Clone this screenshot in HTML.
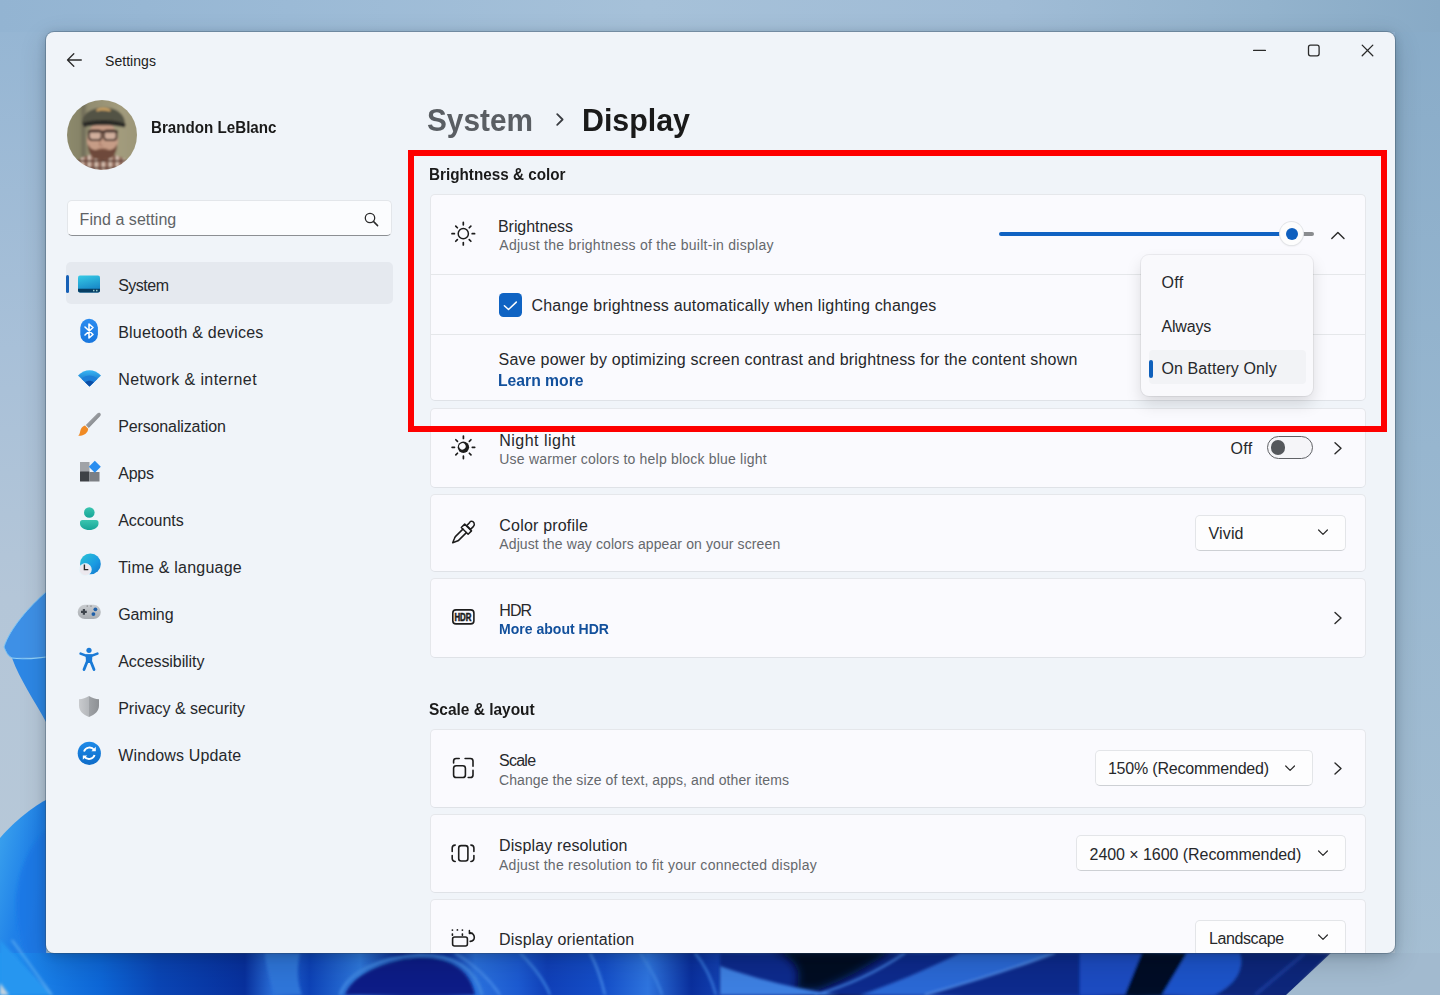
<!DOCTYPE html>
<html><head><meta charset="utf-8"><style>
html,body{margin:0;padding:0;width:1440px;height:995px;overflow:hidden}
body{position:relative;background:#8fb0cd;font-family:"Liberation Sans",sans-serif}
.a,.t{position:absolute}
.t{white-space:nowrap}
#win{position:absolute;left:46px;top:32px;width:1349px;height:921px;border-radius:8px;overflow:hidden;background:#f0f4f9;box-shadow:0 0 0 1px rgba(50,70,90,0.32),0 2px 10px rgba(20,40,60,0.22),0 8px 28px rgba(0,0,0,0.16)}
#inner{position:absolute;left:-46px;top:-32px;width:1440px;height:995px}
.card{position:absolute;left:430px;width:936px;background:#fafafe;border:1px solid #e5e7eb;border-bottom-color:#dfe2e7;border-radius:5px;box-sizing:border-box}
.dd{background:#fdfdfe;border:1px solid #e3e5e8;border-bottom-color:#cdd0d4;border-radius:5px;box-sizing:border-box}
</style></head><body>
<svg class="a" style="left:0;top:0" width="1440" height="995" viewBox="0 0 1440 995">
<defs>
<linearGradient id="bgtop" x1="0" y1="0" x2="1" y2="0"><stop offset="0" stop-color="#93b4d2"/><stop offset="0.2" stop-color="#9bbad6"/><stop offset="0.45" stop-color="#a6c1d9"/><stop offset="0.7" stop-color="#a0bcd6"/><stop offset="0.88" stop-color="#93b3cd"/><stop offset="1" stop-color="#88aac6"/></linearGradient>
<linearGradient id="bgl" x1="0" y1="0" x2="0" y2="1"><stop offset="0" stop-color="#94b5d3"/><stop offset="0.35" stop-color="#a8c0d8"/><stop offset="0.6" stop-color="#b4c6d8"/><stop offset="1" stop-color="#b8c9d8"/></linearGradient>
<linearGradient id="bgr" x1="0" y1="0" x2="0" y2="1"><stop offset="0" stop-color="#88abc8"/><stop offset="0.45" stop-color="#97b6cf"/><stop offset="1" stop-color="#a6bfd3"/></linearGradient>
<linearGradient id="pet1" x1="0" y1="0" x2="0" y2="1"><stop offset="0" stop-color="#3b8fe6"/><stop offset="1" stop-color="#2f87e4"/></linearGradient>
<linearGradient id="pet2" x1="0" y1="0" x2="1" y2="1"><stop offset="0" stop-color="#3ea6ee"/><stop offset="0.5" stop-color="#1f80e8"/><stop offset="1" stop-color="#2a78e0"/></linearGradient>
<linearGradient id="blm" x1="0" y1="0" x2="1" y2="0">
<stop offset="0" stop-color="#2196f0"/><stop offset="0.02" stop-color="#1c84ea"/><stop offset="0.07" stop-color="#0d66d6"/><stop offset="0.11" stop-color="#0a45b4"/><stop offset="0.17" stop-color="#08309c"/>
<stop offset="0.19" stop-color="#2a6fd8"/><stop offset="0.215" stop-color="#0d42b6"/><stop offset="0.25" stop-color="#2e78dc"/><stop offset="0.28" stop-color="#08238e"/><stop offset="0.31" stop-color="#0c33a4"/><stop offset="0.33" stop-color="#2a70dc"/>
<stop offset="0.36" stop-color="#1c5ad0"/><stop offset="0.38" stop-color="#1040b8"/><stop offset="0.42" stop-color="#154fc8"/><stop offset="0.45" stop-color="#2e74de"/><stop offset="0.48" stop-color="#0a2f9c"/><stop offset="0.52" stop-color="#1a50c4"/>
<stop offset="0.55" stop-color="#142e90"/><stop offset="0.58" stop-color="#040a2a"/><stop offset="0.61" stop-color="#183c9c"/><stop offset="0.64" stop-color="#2a66d4"/><stop offset="0.67" stop-color="#0c2c92"/><stop offset="0.72" stop-color="#0a35a6"/>
<stop offset="0.76" stop-color="#0a3ab0"/><stop offset="0.79" stop-color="#040e40"/><stop offset="0.83" stop-color="#1a48bc"/><stop offset="0.86" stop-color="#0a2a84"/><stop offset="0.9" stop-color="#0a2570"/><stop offset="0.92" stop-color="#7f98b4"/><stop offset="1" stop-color="#a9c0d3"/>
</linearGradient>
<filter id="blur2"><feGaussianBlur stdDeviation="1.5"/></filter><filter id="blur4" x="-20%" y="-50%" width="140%" height="200%"><feGaussianBlur stdDeviation="4"/></filter>
</defs>
<rect width="1440" height="995" fill="url(#bgl)"/>
<rect x="1395" y="0" width="45" height="995" fill="url(#bgr)"/>
<rect x="0" y="0" width="1440" height="32" fill="url(#bgtop)"/>
<path d="M46 592C30 606 10 628 4 647C6 652 8 656 12 658L46 657Z" fill="#3e90e6"/>
<path d="M12 658C20 680 34 700 46 722V657Z" fill="#2d87e5"/>
<path d="M12 658C24 660 36 658 46 657" stroke="#8fd0f8" stroke-width="1.2" fill="none"/>
<path d="M46 592C30 606 10 628 4 647C6 652 8 656 12 658" stroke="#7cc4f4" stroke-width="1" fill="none"/>
<path d="M46 800C30 808 10 826 0 838V995H46Z" fill="url(#pet2)"/>
<path d="M46 830C30 845 18 870 16 900C16 940 30 970 46 985Z" fill="#1a78e6" filter="url(#blur2)" opacity="0.8"/>
<path d="M0 983L10 995H0Z" fill="#c6d3de"/>
<rect x="0" y="953" width="1440" height="42" fill="url(#blm)"/>
<g filter="url(#blur2)">
<path d="M0 940L52 995H0Z" fill="#2596f0"/>
<path d="M12 940L52 995" stroke="#7cc6f6" stroke-width="1.2"/>
<path d="M345 995C352 975 380 962 420 958C450 958 470 970 475 995Z" fill="#0a1f86"/>
<path d="M340 995C348 972 378 958 420 955C455 955 475 968 482 995" stroke="#3f86e0" stroke-width="3" fill="none"/>
<path d="M265 953H300C296 970 298 985 302 995H275C270 980 266 965 265 953Z" fill="#2f74d8"/>
<path d="M455 953C475 965 490 980 500 995" stroke="#4a8eea" stroke-width="2" fill="none"/>
<path d="M520 953C535 968 545 982 550 995" stroke="#3f86e4" stroke-width="2" fill="none"/>
<path d="M590 953C598 968 602 982 605 995" stroke="#4a8eea" stroke-width="2" fill="none"/>
<path d="M640 953C650 968 658 982 662 995" stroke="#3f86e4" stroke-width="2" fill="none"/>
<path d="M695 953C705 965 712 980 716 995" stroke="#3a7ee0" stroke-width="2" fill="none"/>
<path d="M720 953H1080V995H720Z" fill="#0a2a8c"/>
</g><path d="M770 948H895C870 966 845 980 818 990H795C802 975 800 960 770 948Z" fill="#030a20" filter="url(#blur4)"/><g filter="url(#blur2)">

<path d="M720 966C760 980 800 990 840 995H720Z" fill="#3d7fe0"/>
<path d="M960 953H1055C1010 970 960 985 925 995H860C890 985 930 968 960 953Z" fill="#2c68d4"/>
<path d="M905 953C880 970 850 985 815 995" stroke="#4a8cec" stroke-width="2" fill="none"/>
<path d="M1055 953C1010 970 960 985 925 995" stroke="#5a9af0" stroke-width="1.5" fill="none"/>
<path d="M1080 953H1142L1125 995H1080Z" fill="#1a4cc0"/>
<path d="M1142 953H1187L1162 995H1125Z" fill="#030a28"/>
<path d="M1187 953H1240C1245 970 1235 985 1215 995H1162Z" fill="#1f52c8"/>
<path d="M1240 953H1332L1286 995H1215C1235 985 1245 970 1240 953Z" fill="#0a267a"/>
<path d="M1305 953L1255 995" stroke="#1a3a9a" stroke-width="3" fill="none"/>
<path d="M0 983L9 995H0Z" fill="#c6d3de"/>
</g>
<path d="M1331 953H1440V995H1286Z" fill="#a2bacf"/>
</svg>

<div id="win"><div id="inner">
<div class="t" style="left:105px;top:52px;font-size:14px;line-height:19px;font-weight:400;color:#202020;letter-spacing:0.052px;">Settings</div>
<div class="a" style="left:66.8px;top:100.2px;width:70px;height:70px;border-radius:50%;overflow:hidden">
<svg width="70" height="70" viewBox="0 0 70 70">
<defs>
<filter id="av" x="-10%" y="-10%" width="120%" height="120%"><feGaussianBlur stdDeviation="1.1"/></filter>
<linearGradient id="avbg" x1="0" y1="0" x2="1" y2="0"><stop offset="0" stop-color="#8e8b6e"/><stop offset="0.2" stop-color="#878468"/><stop offset="0.25" stop-color="#6f6c58"/><stop offset="0.31" stop-color="#918c70"/><stop offset="0.75" stop-color="#a29b7c"/><stop offset="1" stop-color="#9c9678"/></linearGradient>
<pattern id="plaid" width="7" height="7" patternUnits="userSpaceOnUse"><rect width="7" height="7" fill="#a07a6a"/><rect width="2.5" height="7" fill="#d9c3b4"/><rect y="4" width="7" height="2" fill="#5e4036"/><rect x="5" width="1.2" height="7" fill="#6e4c40"/></pattern>
</defs>
<g filter="url(#av)">
<rect x="-2" y="-2" width="74" height="74" fill="url(#avbg)"/>
<path d="M4 74C6 60 16 54 35 54C54 54 64 60 66 74Z" fill="url(#plaid)"/>
<ellipse cx="35.5" cy="40" rx="15.5" ry="18.5" fill="#c69c86"/>
<path d="M21 44C21 56 27 60 35.5 60C44 60 50 56 50 44C48 49 44 51 40 49.5C37 48 34 48 31 49.5C27 51 23 49 21 44Z" fill="#6e4a3a"/>
<path d="M30 49.5C33 48.5 38 48.5 41 49.5" stroke="#9a6e5a" stroke-width="1.2" fill="none"/>
<path d="M33.5 38L32.5 45L36 46" stroke="#a87a66" stroke-width="1.2" fill="none"/>
<path d="M15 24C14 3 58 1 58 24Z" fill="#535244"/>
<path d="M15 23C26 19 48 19 59 24L57.5 27.5C48 24.5 25 24.5 17 27Z" fill="#2b2a27"/>
<path d="M29 10C31 6.5 41 6.5 44 10L43 11.5C38 10 33 10 30 11.5Z" fill="#c9a062"/>
<rect x="22" y="30.5" width="12.5" height="9.5" rx="3" fill="#d0ae9c" stroke="#45302a" stroke-width="1.8"/>
<rect x="37" y="30.5" width="12.5" height="9.5" rx="3" fill="#d0ae9c" stroke="#45302a" stroke-width="1.8"/>
<path d="M21 31.5H51" stroke="#3e2c26" stroke-width="2"/>
</g>
</svg></div>
<div class="t" style="left:150.5px;top:116.5px;font-size:16px;line-height:22px;font-weight:700;color:#1a1a1a;transform:scaleX(0.9474);transform-origin:0 0;">Brandon LeBlanc</div>
<div class="a" style="left:66.8px;top:199.6px;width:325.4px;height:36.6px;background:#fbfcfe;border:1px solid #e3e6ea;border-bottom:1px solid #8c8f93;border-radius:5px;box-sizing:border-box"></div>
<div class="t" style="left:79.6px;top:209px;font-size:16px;line-height:22px;font-weight:400;color:#606366;letter-spacing:0.046px;">Find a setting</div>
<div class="a" style="left:65.7px;top:262.4px;width:327.4px;height:41.8px;background:#e5e9ef;border-radius:5px"></div>
<div class="a" style="left:65.8px;top:274.7px;width:3.7px;height:18.6px;background:#1660b6;border-radius:2px"></div>
<div class="t" style="left:118.2px;top:275px;font-size:16px;line-height:22px;font-weight:400;color:#26282b;letter-spacing:-0.507px;">System</div>
<div class="t" style="left:118.2px;top:322px;font-size:16px;line-height:22px;font-weight:400;color:#26282b;letter-spacing:0.204px;">Bluetooth &amp; devices</div>
<div class="t" style="left:118.2px;top:369px;font-size:16px;line-height:22px;font-weight:400;color:#26282b;letter-spacing:0.399px;">Network &amp; internet</div>
<div class="t" style="left:118.2px;top:416px;font-size:16px;line-height:22px;font-weight:400;color:#26282b;letter-spacing:-0.127px;">Personalization</div>
<div class="t" style="left:118.2px;top:463px;font-size:16px;line-height:22px;font-weight:400;color:#26282b;letter-spacing:-0.217px;">Apps</div>
<div class="t" style="left:118.2px;top:510px;font-size:16px;line-height:22px;font-weight:400;color:#26282b;letter-spacing:-0.052px;">Accounts</div>
<div class="t" style="left:118.2px;top:557px;font-size:16px;line-height:22px;font-weight:400;color:#26282b;letter-spacing:0.229px;">Time &amp; language</div>
<div class="t" style="left:118.2px;top:604px;font-size:16px;line-height:22px;font-weight:400;color:#26282b;letter-spacing:-0.137px;">Gaming</div>
<div class="t" style="left:118.2px;top:651px;font-size:16px;line-height:22px;font-weight:400;color:#26282b;letter-spacing:-0.072px;">Accessibility</div>
<div class="t" style="left:118.2px;top:698px;font-size:16px;line-height:22px;font-weight:400;color:#26282b;letter-spacing:-0.019px;">Privacy &amp; security</div>
<div class="t" style="left:118.2px;top:745px;font-size:16px;line-height:22px;font-weight:400;color:#26282b;letter-spacing:0.154px;">Windows Update</div>
<svg class="a" style="left:77px;top:274px" width="24" height="20" viewBox="0 0 24 20"><defs><linearGradient id="sys" x1="0" y1="0" x2="0.3" y2="1"><stop offset="0" stop-color="#36cbe6"/><stop offset="1" stop-color="#1684c6"/></linearGradient></defs><rect x="1" y="1.5" width="22" height="17" rx="2" fill="url(#sys)"/><path d="M1 14.8H23V16.5A2 2 0 0 1 21 18.5H3A2 2 0 0 1 1 16.5Z" fill="#073e63"/><rect x="16" y="15.8" width="1.5" height="1.5" fill="#9cc"/><rect x="19" y="15.8" width="1.5" height="1.5" fill="#9cc"/></svg>
<svg class="a" style="left:79px;top:318px" width="20" height="26" viewBox="0 0 20 26"><defs><linearGradient id="bt" x1="0" y1="0" x2="0" y2="1"><stop offset="0" stop-color="#2c8cf0"/><stop offset="1" stop-color="#1876de"/></linearGradient></defs><rect x="1.3" y="0.8" width="17.6" height="24.2" rx="8.8" fill="url(#bt)"/><path d="M6 9L14 16.5L10 20V6L14 9.5L6 17" stroke="#fff" stroke-width="1.6" fill="none" stroke-linejoin="round" stroke-linecap="round"/></svg>
<svg class="a" style="left:77px;top:368px" width="25" height="20" viewBox="0 0 25 20"><defs><linearGradient id="wf" x1="0" y1="0" x2="0" y2="1"><stop offset="0" stop-color="#38b6f4"/><stop offset="1" stop-color="#0c5bb8"/></linearGradient></defs><path d="M1 7.5C4.5 4 8.5 2.2 12.5 2.2C16.5 2.2 20.5 4 24 7.5L12.5 18.5Z" fill="url(#wf)"/><path d="M4.5 10.8C7 8.6 9.7 7.6 12.5 7.6C15.3 7.6 18 8.6 20.5 10.8L12.5 18.5Z" fill="#1d7fd8"/><path d="M8.2 14.3C9.5 13.3 11 12.8 12.5 12.8C14 12.8 15.5 13.3 16.8 14.3L12.5 18.5Z" fill="#0b4ea6"/></svg>
<svg class="a" style="left:77px;top:412px" width="25" height="25" viewBox="0 0 25 25"><defs><linearGradient id="pb" x1="0" y1="0" x2="1" y2="1"><stop offset="0" stop-color="#b9bcc0"/><stop offset="1" stop-color="#6d7075"/></linearGradient></defs><path d="M23.2 1.3C24.2 2.2 23.8 3.6 22.8 4.6L11.8 16L8.8 13L20 1.8C21 0.8 22.3 0.5 23.2 1.3Z" fill="url(#pb)"/><path d="M8 13.5L11.2 16.7C11 20.5 7.5 24 1.3 23.8C3.3 21.8 2.8 19.6 3.8 17.3C4.8 15 6.5 14 8 13.5Z" fill="#f08a24"/></svg>
<svg class="a" style="left:79px;top:460px" width="23" height="23" viewBox="0 0 23 23"><rect x="1" y="2" width="9.5" height="10" fill="#a0a3a8"/><rect x="1" y="11.5" width="9.5" height="10" rx="0.5" fill="#3e4146"/><rect x="10.5" y="12" width="10" height="9.5" fill="#7c7f84"/><path d="M15.8 0.8L21.8 6.8L15.8 12.8L9.8 6.8Z" fill="#2a8ef0"/></svg>
<svg class="a" style="left:79px;top:506px" width="21" height="25" viewBox="0 0 21 25"><defs><linearGradient id="ac" x1="0" y1="0" x2="0" y2="1"><stop offset="0" stop-color="#3ac5b0"/><stop offset="1" stop-color="#17a497"/></linearGradient></defs><circle cx="10.3" cy="6.5" r="5.3" fill="url(#ac)"/><path d="M1 16.5A2.5 2.5 0 0 1 3.5 14H17A2.5 2.5 0 0 1 19.5 16.5V17.5C19.5 21.5 15 24 10.3 24C5.5 24 1 21.5 1 17.5Z" fill="url(#ac)"/></svg>
<svg class="a" style="left:74px;top:549px" width="30" height="30" viewBox="74 549 30 30"><defs><linearGradient id="gl" x1="0" y1="0" x2="1" y2="1"><stop offset="0" stop-color="#2cc6d6"/><stop offset="0.6" stop-color="#1a9ae2"/><stop offset="1" stop-color="#1274c8"/></linearGradient></defs><circle cx="90.4" cy="563.9" r="10.4" fill="url(#gl)"/><circle cx="85.3" cy="569.6" r="6" fill="#ece8ee" stroke="#e6f4fa" stroke-width="0.8"/><path d="M84.4 564.6V569.6H88.3" stroke="#2a2a2a" stroke-width="1.4" fill="none"/></svg>
<svg class="a" style="left:74px;top:598px" width="30" height="28" viewBox="74 598 30 28"><defs><linearGradient id="gm" x1="0" y1="0" x2="0" y2="1"><stop offset="0" stop-color="#c9ccd0"/><stop offset="1" stop-color="#a9adb2"/></linearGradient></defs><rect x="77.7" y="604.8" width="23.1" height="14.3" rx="7.15" fill="url(#gm)"/><path d="M81 611.8H86.8M83.9 608.9V614.7" stroke="#3e444c" stroke-width="2.2"/><circle cx="95.4" cy="609.3" r="1.9" fill="#1f5fa8"/><circle cx="93.4" cy="614.1" r="1.9" fill="#1f5fa8"/><circle cx="87.2" cy="606" r="0.6" fill="#555"/><circle cx="91" cy="606" r="0.6" fill="#555"/></svg>
<svg class="a" style="left:74px;top:644px" width="30" height="30" viewBox="74 644 30 30"><g fill="#1a7ad6" stroke="#1a7ad6" stroke-linecap="round" stroke-linejoin="round"><circle cx="89" cy="650.3" r="2.6" stroke="none"/><path d="M80.6 653.6L86 655.6H92L97.4 653.6" stroke-width="2.6" fill="none"/><path d="M85.6 654.4H92.4L92 663H86Z" stroke="none"/><path d="M91.2 662.5L94 669.6M86.8 662.5L84 669.6" stroke-width="2.8" fill="none"/></g></svg>
<svg class="a" style="left:78px;top:695px" width="22" height="23" viewBox="0 0 22 23"><defs><linearGradient id="sh" x1="0" y1="0" x2="1" y2="0"><stop offset="0" stop-color="#c9cbce"/><stop offset="0.5" stop-color="#b4b7bb"/><stop offset="0.5" stop-color="#9fa2a6"/><stop offset="1" stop-color="#8d9094"/></linearGradient></defs><path d="M11 1C14 3 17.5 4.2 21 4.3V10.5C21 16 17 19.8 11 22C5 19.8 1 16 1 10.5V4.3C4.5 4.2 8 3 11 1Z" fill="url(#sh)"/></svg>
<svg class="a" style="left:77px;top:741px" width="25" height="25" viewBox="0 0 25 25"><defs><linearGradient id="wu" x1="0" y1="0" x2="0" y2="1"><stop offset="0" stop-color="#1d8ae8"/><stop offset="1" stop-color="#0f6cc8"/></linearGradient></defs><circle cx="12.3" cy="12.3" r="11.6" fill="url(#wu)"/><path d="M7 10.5A5.8 5.8 0 0 1 17.2 9M17.6 14A5.8 5.8 0 0 1 7.4 15.6" stroke="#fff" stroke-width="1.9" fill="none"/><path d="M18.8 5.8V10.2H14.4Z" fill="#fff"/><path d="M5.8 18.8V14.4H10.2Z" fill="#fff"/></svg>

<div class="t" style="left:427px;top:98px;font-size:32px;line-height:44px;font-weight:700;color:#5a5e63;transform:scaleX(0.9311);transform-origin:0 0;">System</div>
<div class="t" style="left:581.5px;top:98px;font-size:32px;line-height:44px;font-weight:700;color:#1a1a1a;transform:scaleX(0.9488);transform-origin:0 0;">Display</div>
<div class="t" style="left:429px;top:163.8px;font-size:16px;line-height:22px;font-weight:700;color:#1a1a1a;transform:scaleX(0.9536);transform-origin:0 0;">Brightness &amp; color</div>
<div class="t" style="left:428.5px;top:698.5px;font-size:16px;line-height:22px;font-weight:700;color:#1a1a1a;transform:scaleX(0.9664);transform-origin:0 0;">Scale &amp; layout</div>
<div class="card" style="top:194px;height:207px;"></div>
<div class="a" style="left:431px;top:273.9px;width:934px;height:1px;background:#e5e7ea"></div>
<div class="a" style="left:431px;top:334.3px;width:934px;height:1px;background:#e5e7ea"></div>
<div class="card" style="top:407.5px;height:80.0px;"></div>
<div class="card" style="top:493.7px;height:78.59999999999997px;"></div>
<div class="card" style="top:578.4px;height:79.20000000000005px;"></div>
<div class="card" style="top:728.9px;height:78.70000000000005px;"></div>
<div class="card" style="top:814.3px;height:78.70000000000005px;"></div>
<div class="card" style="top:899.1px;height:90.89999999999998px;"></div>
<div class="t" style="left:498px;top:215.5px;font-size:16px;line-height:22px;font-weight:400;color:#26282b;letter-spacing:-0.060px;">Brightness</div>
<div class="t" style="left:499.3px;top:236.3px;font-size:14px;line-height:19px;font-weight:400;color:#65686c;letter-spacing:0.272px;">Adjust the brightness of the built-in display</div>
<div class="a" style="left:998.9px;top:231.6px;width:295px;height:4.6px;background:#1062c2;border-radius:3px"></div>
<div class="a" style="left:1292px;top:231.8px;width:21.5px;height:4.2px;background:#8a8c8f;border-radius:2px"></div>
<div class="a" style="left:1280.1px;top:222.1px;width:23.4px;height:23.4px;background:#fdfdfd;border-radius:50%;box-shadow:0 0 0 1px #e3e5e8, 0 1px 2px rgba(0,0,0,0.12)"></div>
<div class="a" style="left:1285.5px;top:227.5px;width:12.6px;height:12.6px;background:#0f60bf;border-radius:50%"></div>
<div class="a" style="left:498.6px;top:293px;width:23.4px;height:23.5px;background:#0f63c3;border-radius:4.5px"></div>
<div class="t" style="left:531.5px;top:294.5px;font-size:16px;line-height:22px;font-weight:400;color:#26282b;letter-spacing:0.190px;">Change brightness automatically when lighting changes</div>
<div class="t" style="left:498.6px;top:348.5px;font-size:16px;line-height:22px;font-weight:400;color:#26282b;letter-spacing:0.208px;">Save power by optimizing screen contrast and brightness for the content shown</div>
<div class="t" style="left:498px;top:370px;font-size:16px;line-height:22px;font-weight:700;color:#12509c;transform:scaleX(0.9811);transform-origin:0 0;">Learn more</div>
<div class="a" style="left:1141.3px;top:254.6px;width:172px;height:141.3px;background:#f9f9fc;border-radius:8px;box-shadow:0 0 0 1px rgba(0,0,0,0.055),0 8px 16px rgba(0,0,0,0.13)"></div>
<div class="a" style="left:1148.6px;top:349.5px;width:157.2px;height:34.8px;background:#f2f3f6;border-radius:4px"></div>
<div class="a" style="left:1149px;top:360.3px;width:3.9px;height:18.2px;background:#0f60bb;border-radius:2px"></div>
<div class="t" style="left:1161.5px;top:271.8px;font-size:16px;line-height:22px;font-weight:400;color:#26282b;letter-spacing:0.317px;">Off</div>
<div class="t" style="left:1161.5px;top:315.6px;font-size:16px;line-height:22px;font-weight:400;color:#26282b;letter-spacing:-0.197px;">Always</div>
<div class="t" style="left:1161.5px;top:358.4px;font-size:16px;line-height:22px;font-weight:400;color:#26282b;letter-spacing:0.098px;">On Battery Only</div>
<div class="t" style="left:499.3px;top:429.6px;font-size:16px;line-height:22px;font-weight:400;color:#26282b;letter-spacing:0.477px;">Night light</div>
<div class="t" style="left:499.3px;top:450.4px;font-size:14px;line-height:19px;font-weight:400;color:#65686c;letter-spacing:0.199px;">Use warmer colors to help block blue light</div>
<div class="t" style="left:1230.6px;top:438.1px;font-size:16px;line-height:22px;font-weight:400;color:#26282b;letter-spacing:0.317px;">Off</div>
<div class="a" style="left:1267.3px;top:436px;width:46.1px;height:22.6px;border:1.4px solid #606266;border-radius:12px;box-sizing:border-box;background:#f5f5f8"></div>
<div class="a" style="left:1270.9px;top:440.4px;width:14.5px;height:14.5px;background:#55585c;border-radius:50%"></div>
<div class="t" style="left:499.3px;top:514.6px;font-size:16px;line-height:22px;font-weight:400;color:#26282b;letter-spacing:0.195px;">Color profile</div>
<div class="t" style="left:499.3px;top:535.2px;font-size:14px;line-height:19px;font-weight:400;color:#65686c;letter-spacing:0.110px;">Adjust the way colors appear on your screen</div>
<div class="a dd" style="left:1195.3px;top:514.5px;width:150.3px;height:36px"></div>
<div class="t" style="left:1208.6px;top:522.6px;font-size:16px;line-height:22px;font-weight:400;color:#26282b;letter-spacing:0.122px;">Vivid</div>
<div class="t" style="left:499.3px;top:599.8px;font-size:16px;line-height:22px;font-weight:400;color:#26282b;letter-spacing:-0.955px;">HDR</div>
<div class="t" style="left:498.6px;top:619.4px;font-size:14.5px;line-height:20px;font-weight:700;color:#12509c;transform:scaleX(0.9685);transform-origin:0 0;">More about HDR</div>
<div class="t" style="left:499px;top:749.8px;font-size:16px;line-height:22px;font-weight:400;color:#26282b;letter-spacing:-0.745px;">Scale</div>
<div class="t" style="left:499px;top:771.3px;font-size:14px;line-height:19px;font-weight:400;color:#65686c;letter-spacing:0.095px;">Change the size of text, apps, and other items</div>
<div class="a dd" style="left:1095.1px;top:750.3px;width:218.1px;height:35.9px"></div>
<div class="t" style="left:1107.9px;top:758.4px;font-size:16px;line-height:22px;font-weight:400;color:#26282b;letter-spacing:-0.196px;">150% (Recommended)</div>
<div class="t" style="left:499px;top:835.1px;font-size:16px;line-height:22px;font-weight:400;color:#26282b;letter-spacing:0.129px;">Display resolution</div>
<div class="t" style="left:499px;top:856px;font-size:14px;line-height:19px;font-weight:400;color:#65686c;letter-spacing:0.269px;">Adjust the resolution to fit your connected display</div>
<div class="a dd" style="left:1075.7px;top:835.2px;width:270.3px;height:35.8px"></div>
<div class="t" style="left:1089.6px;top:844px;font-size:16px;line-height:22px;font-weight:400;color:#26282b;letter-spacing:-0.057px;">2400 × 1600 (Recommended)</div>
<div class="t" style="left:499px;top:929px;font-size:16px;line-height:22px;font-weight:400;color:#26282b;letter-spacing:0.198px;">Display orientation</div>
<div class="a dd" style="left:1195.3px;top:919.6px;width:150.7px;height:36px"></div>
<div class="t" style="left:1209px;top:927.9px;font-size:16px;line-height:22px;font-weight:400;color:#26282b;letter-spacing:-0.399px;">Landscape</div>
<svg class="a" style="left:0;top:0" width="1440" height="995" viewBox="0 0 1440 995">
<g fill="none" stroke="#2a2a2a" stroke-width="1.3" stroke-linecap="round" stroke-linejoin="round">
<path d="M67.5 60H81.3M67.5 60L73.8 53.7M67.5 60L73.8 66.3"/>
<path d="M1253.6 50.4H1265.4"/>
<rect x="1308.5" y="45.2" width="10.6" height="10.6" rx="2"/>
<path d="M1362.2 45.1L1372.8 55.7M1372.8 45.1L1362.2 55.7"/>
<circle cx="370" cy="218" r="4.7"/><path d="M373.4 221.4L377.6 225.6" stroke-width="1.5"/>
<path d="M557.2 114.2L562.6 119.5L557.2 124.8" stroke="#3a3d42" stroke-width="1.8"/>
<path d="M1331.8 238.6L1337.9 232.5L1344 238.6" stroke-width="1.4"/>
<path d="M1335 442.8L1341 448.3L1335 453.8" stroke-width="1.4"/>
<path d="M1335 612.5L1341 618L1335 623.5" stroke-width="1.4"/>
<path d="M1335 763L1341 768.5L1335 774" stroke-width="1.4"/>
<path d="M1318.6 530L1323 534.4L1327.4 530" stroke-width="1.2"/>
<path d="M1285.7 766L1290.1 770.4L1294.5 766" stroke-width="1.2"/>
<path d="M1318.6 851L1323 855.4L1327.4 851" stroke-width="1.2"/>
<path d="M1318.6 935L1323 939.4L1327.4 935" stroke-width="1.2"/>
</g>
<g fill="none" stroke="#1c1c1c" stroke-linecap="round" stroke-linejoin="round">
<circle cx="463.3" cy="233.7" r="5.1" stroke-width="1.5"/>
<path d="M472.20 233.70L474.60 233.70M469.24 239.64L470.87 241.27M463.30 242.60L463.30 245.00M457.36 239.64L455.73 241.27M454.40 233.70L452.00 233.70M457.36 227.76L455.73 226.13M463.30 224.80L463.30 222.40M469.24 227.76L470.87 226.13" stroke-width="1.7"/>
<path d="M472.30 447.30L474.70 447.30M469.34 453.24L470.97 454.87M463.40 456.20L463.40 458.60M457.46 453.24L455.83 454.87M454.50 447.30L452.10 447.30M457.46 441.36L455.83 439.73M463.40 438.40L463.40 436.00M469.34 441.36L470.97 439.73" stroke-width="1.7"/>
<path d="M470.6 521.4C471.9 521 473.3 521.6 474 522.9C474.6 524.1 474.3 525.6 473.3 526.6L470.5 529.4L466.7 525.6L469.5 522.8C469.9 522.1 470.2 521.6 470.6 521.4Z" stroke-width="1.5"/>
<path d="M461.3 527.5L464.7 524.1L471.5 530.9L468.1 534.3Z" stroke-width="1.5"/>
<path d="M462.9 529.1L455.6 536.4C454.9 537.1 454.5 538 454.2 538.9L452.7 542.8L456.6 541.3C457.5 541 458.4 540.6 459.1 539.9L466.4 532.6" stroke-width="1.5"/>
<rect x="452.8" y="609.9" width="21.1" height="14" rx="3.2" stroke-width="1.6"/>
<path d="M459.2 758.5H456.2A2.6 2.6 0 0 0 453.6 761.1V763M465.1 758.5H470.4A2.6 2.6 0 0 1 473 761.1V766.2M473 770.4V774.9A2.6 2.6 0 0 1 470.4 777.5H468.2" stroke-width="1.6"/>
<rect x="453.6" y="765.7" width="11.8" height="11.8" rx="2.6" stroke-width="1.6"/>
<path d="M455.2 845.1A3 3 0 0 0 452.2 848.1V851.5M452.2 855.5V858.5A3 3 0 0 0 455.2 861.5M470.9 845.1A3 3 0 0 1 473.9 848.1V851.5M473.9 855.5V858.5A3 3 0 0 1 470.9 861.5" stroke-width="1.6"/>
<rect x="458.7" y="845.6" width="9.2" height="15.4" rx="2.4" stroke-width="1.6"/>
<rect x="452.6" y="937" width="14.8" height="9" rx="2" stroke-width="1.6"/>
<path d="M469.8 932.6C472.6 933.4 474.3 935.4 474.3 937.4C474.3 939.4 472.6 941 470.2 941.4" stroke-width="1.6"/>
<path d="M469.4 930.6L469.4 933.6L472.3 933.2" stroke-width="1.5"/>
</g>
<g fill="#1c1c1c">
<circle cx="452.4" cy="930.1" r="0.9"/><circle cx="457.4" cy="929.9" r="0.9"/><circle cx="462.4" cy="930.1" r="0.9"/>
<rect x="451.6" y="933.3" width="1.6" height="2.6" rx="0.6"/><rect x="461.6" y="933.3" width="1.6" height="2.6" rx="0.6"/>
</g>
<circle cx="463.4" cy="447.3" r="5.7" fill="#1c1c1c"/>
<ellipse cx="462.4" cy="446.4" rx="3.3" ry="3.1" fill="#fafafe" transform="rotate(-35 462.4 446.4)"/>
<text x="462.9" y="620.9" font-family="Liberation Sans" font-weight="700" font-size="10" textLength="17" lengthAdjust="spacingAndGlyphs" text-anchor="middle" fill="#1c1c1c" stroke="#1c1c1c" stroke-width="0.55">HDR</text>
<path d="M504.4 305.8L508.5 309.5L516.3 302.1" fill="none" stroke="#fff" stroke-width="1.5" stroke-linecap="round" stroke-linejoin="round"/>
</svg>
<div class="a" style="left:408px;top:150.1px;width:979px;height:281.7px;border:6.3px solid #fe0000;box-sizing:border-box"></div>

</div></div>
</body></html>
